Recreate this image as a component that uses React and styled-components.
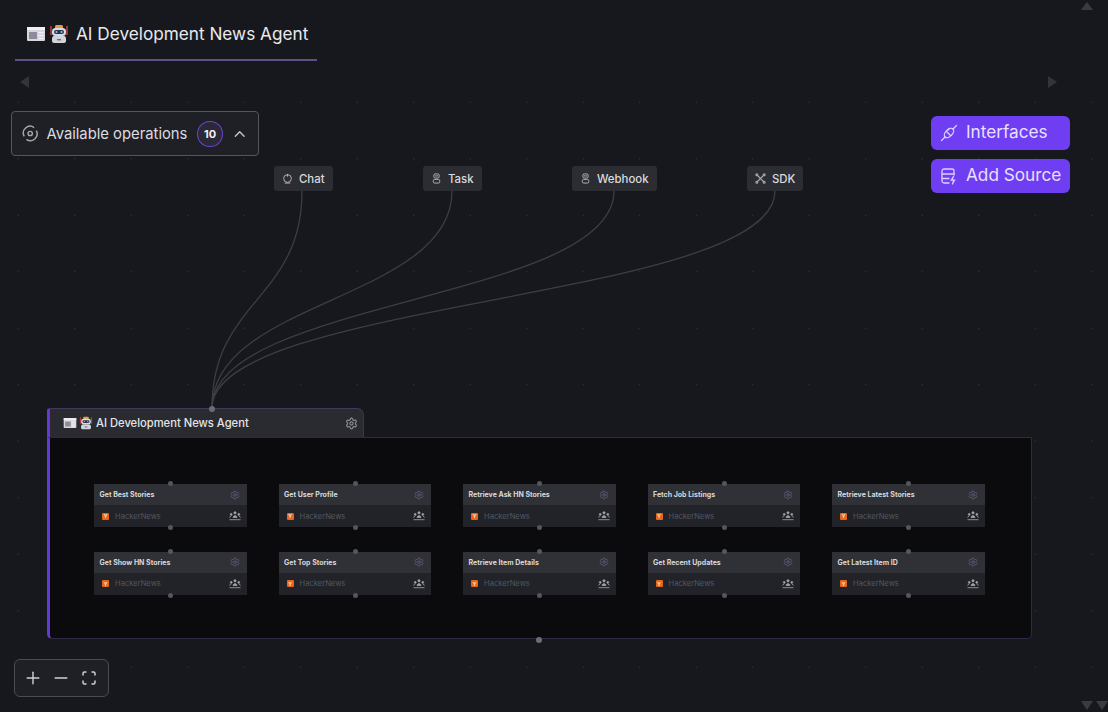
import React from "react";
import styled, { createGlobalStyle } from "styled-components";
import { Plus, Minus, ChevronUp, Settings } from "lucide-react";

const GlobalStyle = createGlobalStyle`
  html, body {
    margin: 0;
    height: 100%;
    background: #17181d;
    overflow: hidden;
    font-family: Inter, "Noto Sans", sans-serif;
  }
`;

const Page = styled.div`
  width: 1108px;
  height: 712px;
  display: flex;
  flex-direction: column;
  position: relative;
  overflow: hidden;
  background: #17181d;
  color: #e8e8ec;
  white-space: nowrap;
`;

const TabBar = styled.div`
  height: 61px;
  padding-left: 15px;
  display: flex;
  align-items: flex-end;
  flex-shrink: 0;
`;

const Tab = styled.div`
  width: 302px;
  height: 61px;
  box-sizing: border-box;
  padding: 8px 0 0 11px;
  display: flex;
  align-items: center;
  gap: 3px;
  border-bottom: 2px solid #5f5186;
  font-size: 17.2px;
  color: #e9e9ee;
`;

const TabLabel = styled.span`
  margin-left: 4px;
`;

const Canvas = styled.div`
  flex: 1;
  position: relative;
  background-color: #17181d;
  background-image: radial-gradient(circle, #3b3c42 0.8px, transparent 1px);
  background-size: 56.5px 56.5px;
  background-position: -10px 13px;
`;

const Arrow = styled.div`
  position: absolute;
  width: 0;
  height: 0;
  border-style: solid;
  border-color: transparent;
  ${(p) => p.$dir === "left" && `border-width: 6px 9px 6px 0; border-right-color: #33343a;`}
  ${(p) => p.$dir === "right" && `border-width: 6px 0 6px 9px; border-left-color: #33343a;`}
  ${(p) => p.$dir === "up" && `border-width: 0 6px 8px 6px; border-bottom-color: #3a3b41;`}
  ${(p) => p.$dir === "down" && `border-width: 9px 6px 0 6px; border-top-color: #3a3b41;`}
`;

const OperationsPanel = styled.div`
  position: absolute;
  left: 11px;
  top: 50px;
  width: 248px;
  height: 45px;
  box-sizing: border-box;
  padding: 0 10px;
  display: flex;
  align-items: center;
  background: #1f2025;
  border: 1px solid #55565c;
  border-radius: 4px;
  font-size: 14.8px;
  color: #dcdce0;
`;

const OperationsLabel = styled.span`
  margin-left: 8px;
`;

const CountBadge = styled.span`
  width: 26px;
  height: 26px;
  margin-left: 10px;
  margin-right: 8px;
  border-radius: 50%;
  box-sizing: border-box;
  border: 1.5px solid #6a45c9;
  background: #2b2838;
  display: flex;
  align-items: center;
  justify-content: center;
  font-size: 11px;
  font-weight: 700;
  color: #f0f0f4;
`;

const ActionStack = styled.div`
  position: absolute;
  left: 931px;
  top: 55px;
  display: flex;
  flex-direction: column;
  gap: 9px;
`;

const ActionButton = styled.button`
  width: 139px;
  height: 34px;
  padding: 0 0 0 9px;
  display: flex;
  align-items: center;
  gap: 8px;
  border: 0;
  border-radius: 6px;
  background: #6f3df2;
  color: #e9e0ff;
  font-family: inherit;
  font-size: 17.2px;
  font-weight: 400;
`;

const ActionLabel = styled.span`
  margin-top: -3px;
`;

const Trigger = styled.div`
  position: absolute;
  left: ${(p) => p.$x}px;
  top: 105px;
  height: 25px;
  box-sizing: border-box;
  padding: 0 8px;
  display: flex;
  align-items: center;
  gap: 6px;
  background: #2c2d32;
  border-radius: 3px;
  font-size: 11.4px;
  font-weight: 500;
  color: #dadade;
`;

const Edges = styled.svg`
  position: absolute;
  left: 0;
  top: -61px;
  width: 1108px;
  height: 712px;
  pointer-events: none;
`;

const GroupNode = styled.div`
  position: absolute;
  left: 47px;
  top: 347px;
  width: 985px;
  display: flex;
  flex-direction: column;
`;

const GroupHeader = styled.div`
  width: 317px;
  height: 29px;
  box-sizing: border-box;
  padding: 0 5px 0 13px;
  display: flex;
  align-items: center;
  gap: 2px;
  position: relative;
  background: #2a2b31;
  border-top: 1px solid #3f3a59;
  border-left: 3px solid #6238d8;
  border-right: 1px solid #3a3850;
  border-radius: 3px 7px 0 0;
  font-size: 11.2px;
  font-weight: 500;
  color: #e4e4e8;
`;

const GroupTitle = styled.span`
  margin-left: 1px;
  flex: 1;
`;

const GroupBody = styled.div`
  height: 202px;
  position: relative;
  box-sizing: border-box;
  padding: 46px 45px 0 44px;
  background: #0b0b0e;
  border: 1px solid #2e2a44;
  border-left: 3px solid #6238d8;
  border-radius: 0 0 5px 5px;
  display: grid;
  grid-template-columns: repeat(5, 152.5px);
  grid-auto-rows: 43px;
  column-gap: 32px;
  row-gap: 24.5px;
`;

const Handle = styled.span`
  position: absolute;
  left: ${(p) => p.$left || "50%"};
  ${(p) => (p.$bottom ? `bottom: ${p.$offset ?? -3}px;` : "top: -3px;")}
  width: ${(p) => p.$size || 5}px;
  height: ${(p) => p.$size || 5}px;
  margin-left: -2px;
  border-radius: 50%;
  background: ${(p) => p.$color || "#55565c"};
`;

const OperationCard = styled.div`
  position: relative;
  display: flex;
  flex-direction: column;
  border-radius: 2px;
`;

const CardHead = styled.div`
  height: 21px;
  padding: 0 7px 0 5.5px;
  display: flex;
  align-items: center;
  justify-content: space-between;
  background: #303136;
  font-size: 7px;
  font-weight: 700;
  color: #d8d8dc;
`;

const CardFoot = styled.div`
  flex: 1;
  padding: 0 6px 0 8px;
  display: flex;
  align-items: center;
  background: #222328;
  font-size: 7.6px;
  color: #4f5862;
`;

const SourceIcon = styled.span`
  width: 7px;
  height: 7px;
  margin-right: 6px;
  display: flex;
  align-items: center;
  justify-content: center;
  background: #e8661a;
  border-radius: 1px;
  font-size: 5px;
  font-weight: 700;
  color: #f6e6d0;
`;

const SourceName = styled.span`
  flex: 1;
`;

const ZoomControls = styled.div`
  position: absolute;
  left: 14px;
  top: 598px;
  width: 95px;
  height: 38px;
  box-sizing: border-box;
  padding: 0 0 0 8px;
  display: flex;
  align-items: center;
  gap: 8px;
  background: #1f2025;
  border: 1px solid #4b4c52;
  border-radius: 6px;
  color: #cfcfd3;
`;

function ChatIcon() {
  return (
    <svg width="11" height="11" viewBox="0 0 12 12" fill="none" stroke="#b9b9be" strokeWidth="1">
      <circle cx="6" cy="6" r="4.2" />
      <path d="M6 1v3M3 11h6" />
    </svg>
  );
}

function BotStackIcon() {
  return (
    <svg width="11" height="11" viewBox="0 0 12 12" fill="none" stroke="#b9b9be" strokeWidth="1">
      <rect x="3" y="1" width="6" height="4.5" rx="1.6" />
      <rect x="2.5" y="7" width="7" height="4" rx="1.4" />
      <path d="M4 3.2h4" />
    </svg>
  );
}

function SdkIcon() {
  return (
    <svg width="11" height="11" viewBox="0 0 12 12" fill="none" stroke="#a8a8ad" strokeWidth="1.3">
      <path d="M2.5 2.5l7 7M9.5 2.5l-7 7" />
      <circle cx="2" cy="2" r="1" />
      <circle cx="10" cy="2" r="1" />
      <circle cx="2" cy="10" r="1" />
      <circle cx="10" cy="10" r="1" />
    </svg>
  );
}

function OrbitIcon() {
  return (
    <svg width="17" height="17" viewBox="0 0 17 17" fill="none" stroke="#a5a5aa" strokeWidth="1.5">
      <path d="M2.3 11.5A7 7 0 0 1 12.5 2.4" />
      <path d="M14.8 5.6A7 7 0 0 1 4.6 14.6" />
      <circle cx="8.5" cy="8.5" r="2.2" />
    </svg>
  );
}

function PlugIcon() {
  return (
    <svg width="18" height="18" viewBox="0 0 18 18" fill="none" stroke="#dccfff" strokeWidth="1.3" strokeLinecap="round">
      <ellipse cx="9" cy="9" rx="3.4" ry="5.6" transform="rotate(45 9 9)" />
      <path d="M5 13l-3.5 3.5M13 5l3.5-3.5M6.5 7.5l4 4M9.5 4.5l-1.5 1.5" />
    </svg>
  );
}

function SourceStackIcon() {
  return (
    <svg width="18" height="18" viewBox="0 0 18 18" fill="none" stroke="#dccfff" strokeWidth="1.3" strokeLinecap="round">
      <path d="M9 16H4a2 2 0 0 1-2-2V4a2 2 0 0 1 2-2h8a2 2 0 0 1 2 2v4" />
      <path d="M2 7h12M2 11.5h7" />
      <path d="M13.5 9.5l-2.3 3.6h3.3L12.4 17" fill="#dccfff" />
    </svg>
  );
}

function FitIcon() {
  return (
    <svg width="20" height="20" viewBox="-3 -3 20 20" fill="none" stroke="#cfcfd3" strokeWidth="1.5">
      <path d="M1 4.5V2.5A1.5 1.5 0 0 1 2.5 1h2M9.5 1h2A1.5 1.5 0 0 1 13 2.5v2M13 9.5v2a1.5 1.5 0 0 1-1.5 1.5h-2M4.5 13h-2A1.5 1.5 0 0 1 1 11.5v-2" />
    </svg>
  );
}

function NewsEmoji({ size }) {
  return (
    <svg width={size} height={size} viewBox="0 0 20 20">
      <rect x="1" y="3" width="18" height="14" rx="1" fill="#d9d6dc" />
      <rect x="1" y="3" width="18" height="3" fill="#f0eef0" />
      <rect x="3" y="8" width="8" height="7" fill="#8f8a9c" />
      <rect x="12.5" y="8" width="5" height="1.2" fill="#f4f3f5" />
      <rect x="12.5" y="11" width="5" height="1.2" fill="#f4f3f5" />
      <rect x="12.5" y="14" width="5" height="1.2" fill="#f4f3f5" />
    </svg>
  );
}

function RobotEmoji({ size }) {
  return (
    <svg width={size} height={size} viewBox="0 0 20 20">
      <path d="M2 2v9M18 2v9" stroke="#c8453f" strokeWidth="1.4" fill="none" />
      <rect x="6" y="1" width="8" height="4" rx="1.5" fill="#e2a23f" />
      <rect x="3" y="4" width="14" height="8" rx="3.5" fill="#d9dbe2" />
      <rect x="5" y="6" width="10" height="4" rx="2" fill="#2c3150" />
      <circle cx="7.5" cy="8" r="1" fill="#7fd4ef" />
      <circle cx="12.5" cy="8" r="1" fill="#7fd4ef" />
      <path d="M5 12h10q2 0 2 3v2a2 2 0 0 1-2 2H5a2 2 0 0 1-2-2v-2q0-3 2-3z" fill="#d3d3da" />
      <rect x="8" y="15" width="4" height="1.4" fill="#6d6f7c" />
    </svg>
  );
}

function TeamIcon() {
  return (
    <svg width="12" height="10" viewBox="0 0 12 10" fill="#a5a6ab" stroke="#a5a6ab" strokeWidth="0.8">
      <circle cx="6" cy="1.8" r="1.1" />
      <circle cx="2.2" cy="3.4" r="0.9" />
      <circle cx="9.8" cy="3.4" r="0.9" />
      <path d="M4 6.4c.3-1.1 1.1-1.7 2-1.7s1.7.6 2 1.7z" />
      <path d="M.5 6.5c.2-.8.8-1.2 1.6-1.2M11.5 6.5c-.2-.8-.8-1.2-1.600-1.2" fill="none" />
      <path d="M.5 8.7h11" fill="none" />
    </svg>
  );
}

const triggers = [
  { x: 274, label: "Chat", icon: <ChatIcon /> },
  { x: 423, label: "Task", icon: <BotStackIcon /> },
  { x: 572, label: "Webhook", icon: <BotStackIcon /> },
  { x: 747, label: "SDK", icon: <SdkIcon /> },
];

const edgeStarts = [
  [302, 191],
  [452, 191],
  [614, 191],
  [775, 191],
];

const operations = [
  "Get Best Stories",
  "Get User Profile",
  "Retrieve Ask HN Stories",
  "Fetch Job Listings",
  "Retrieve Latest Stories",
  "Get Show HN Stories",
  "Get Top Stories",
  "Retrieve Item Details",
  "Get Recent Updates",
  "Get Latest Item ID",
];

export default function App() {
  return (
    <Page>
      <GlobalStyle />
      <TabBar>
        <Tab>
          <NewsEmoji size={20} />
          <RobotEmoji size={20} />
          <TabLabel>AI Development News Agent</TabLabel>
        </Tab>
      </TabBar>
      <Canvas>
        <Edges viewBox="0 0 1108 712" fill="none">
          {edgeStarts.map(([x, y]) => (
            <path
              key={x}
              d={`M${x} ${y} C${x} 300 212 300 212 408`}
              stroke="#3d3e44"
              strokeWidth="1.3"
            />
          ))}
        </Edges>

        <Arrow $dir="left" style={{ left: 20, top: 15 }} />
        <Arrow $dir="right" style={{ left: 1048, top: 15 }} />

        <OperationsPanel>
          <OrbitIcon />
          <OperationsLabel>Available operations</OperationsLabel>
          <CountBadge>10</CountBadge>
          <ChevronUp size={18} color="#c4c4c8" />
        </OperationsPanel>

        {triggers.map((t) => (
          <Trigger key={t.label} $x={t.x}>
            {t.icon}
            {t.label}
          </Trigger>
        ))}

        <ActionStack>
          <ActionButton>
            <PlugIcon />
            <ActionLabel>Interfaces</ActionLabel>
          </ActionButton>
          <ActionButton>
            <SourceStackIcon />
            <ActionLabel>Add Source</ActionLabel>
          </ActionButton>
        </ActionStack>

        <GroupNode>
          <GroupHeader>
            <Handle $left="161px" $size={6} $color="#6b6c74" />
            <NewsEmoji size={14} />
            <RobotEmoji size={14} />
            <GroupTitle>AI Development News Agent</GroupTitle>
            <Settings size={13} color="#8f9096" />
          </GroupHeader>
          <GroupBody>
            {operations.map((name) => (
              <OperationCard key={name}>
                <Handle />
                <CardHead>
                  {name}
                  <Settings size={10} color="#5f5a80" />
                </CardHead>
                <CardFoot>
                  <SourceIcon>Y</SourceIcon>
                  <SourceName>HackerNews</SourceName>
                  <TeamIcon />
                </CardFoot>
                <Handle $bottom />
              </OperationCard>
            ))}
            <Handle $bottom $offset={-5} $size={6} $left="488px" $color="#6b6c74" />
          </GroupBody>
        </GroupNode>

        <ZoomControls>
          <Plus size={20} strokeWidth={1.7} />
          <Minus size={20} strokeWidth={1.7} />
          <FitIcon />
        </ZoomControls>

        <Arrow $dir="up" style={{ left: 1081, top: -59 }} />
        <Arrow $dir="down" style={{ left: 1081, top: 640 }} />
        <Arrow $dir="down" style={{ left: 1096, top: 640 }} />
      </Canvas>
    </Page>
  );
}
